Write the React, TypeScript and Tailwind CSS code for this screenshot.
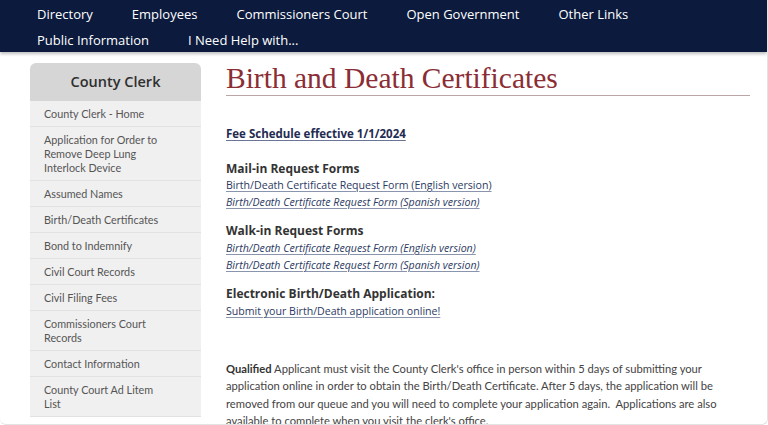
const navTop = ["Directory", "Employees", "Commissioners Court", "Open Government", "Other Links", "Public Information", "I Need Help with..."];

const sideLinks = [
  "County Clerk - Home",
  "Application for Order to Remove Deep Lung Interlock Device",
  "Assumed Names",
  "Birth/Death Certificates",
  "Bond to Indemnify",
  "Civil Court Records",
  "Civil Filing Fees",
  "Commissioners Court Records",
  "Contact Information",
  "County Court Ad Litem List",
];

const font = { fontFamily: '"Open Sans", "Liberation Sans", sans-serif' };
const bodyFont = { fontFamily: 'Lato, "Open Sans", sans-serif' };

function FormLink({ label, italic, className = "" }: { label: string; italic?: boolean; className?: string }) {
  return (
    <a href="#" className={`block text-[10.6px] leading-[17px] text-[#2c3a63] underline decoration-[#8a94ad] underline-offset-2 ${italic ? "italic" : ""} ${className}`}>
      {label}
    </a>
  );
}

export default function App() {
  return (
    <div className="h-[425px] w-[768px] overflow-hidden rounded-b-md border-b border-r border-[#e3e3e3] bg-white" style={font}>
      <nav className="h-[52px] bg-[#0b1a3d] px-[37px] pt-px shadow-[0_2px_3px_rgba(0,0,0,0.25)]">
        <ul className="flex flex-wrap gap-x-[39px]">
          {navTop.map((item) => (
            <li key={item} className="text-[13px] leading-[26px] text-white">{item}</li>
          ))}
        </ul>
      </nav>

      <div className="flex gap-[25px] pl-[30px] pr-[17px] pt-[11px]">
        <aside className="w-[171px] shrink-0">
          <div className="flex h-[38px] items-center justify-center rounded-t-md bg-[#d6d6d6] text-[14.5px] font-semibold text-[#2f2f2f]">
            County Clerk
          </div>
          <ul className="bg-[#f0f0f0]" style={bodyFont}>
            {sideLinks.map((link) => (
              <li key={link} className="border-b border-[#e2e2e2] pb-[5px] pl-[14px] pr-[30px] pt-[6px] text-[10.8px] leading-[14px] text-[#555]">
                {link}
              </li>
            ))}
          </ul>
        </aside>

        <main className="min-w-0 flex-1">
          <h1 className="border-b border-[#bca5a5] pb-[2px] text-[29.5px] leading-[30px] text-[#8b2d34]" style={{ fontFamily: '"Liberation Serif", "DejaVu Serif", serif' }}>
            Birth and Death Certificates
          </h1>

          <a href="#" className="mt-[29px] block text-[11.5px] font-bold leading-[17px] text-[#1f2c52] underline decoration-[#6b7595] underline-offset-2">
            Fee Schedule effective 1/1/2024
          </a>

          <h2 className="mt-[18px] text-[12px] font-bold leading-[17px] text-[#333]">Mail-in Request Forms</h2>
          <FormLink label="Birth/Death Certificate Request Form (English version)" />
          <FormLink label="Birth/Death Certificate Request Form (Spanish version)" italic />

          <h2 className="mt-[11px] text-[12px] font-bold leading-[18px] text-[#333]">Walk-in Request Forms</h2>
          <FormLink label="Birth/Death Certificate Request Form (English version)" italic />
          <FormLink label="Birth/Death Certificate Request Form (Spanish version)" italic />

          <h2 className="mt-[11px] text-[12px] font-bold leading-[17px] text-[#333]">Electronic Birth/Death Application:</h2>
          <FormLink label="Submit your Birth/Death application online!" className="mt-px" />

          <p className="mt-[40px] pr-[10px] text-[11.2px] leading-[17.4px] text-[#444]" style={bodyFont}>
            <b className="text-[#333]">Qualified</b> Applicant must visit the County Clerk's office in person within 5 days of submitting your application online in order to obtain the Birth/Death Certificate. After 5 days, the application will be removed from our queue and you will need to complete your application again.&nbsp; Applications are also available to complete when you visit the clerk's office.
          </p>
        </main>
      </div>
    </div>
  );
}
